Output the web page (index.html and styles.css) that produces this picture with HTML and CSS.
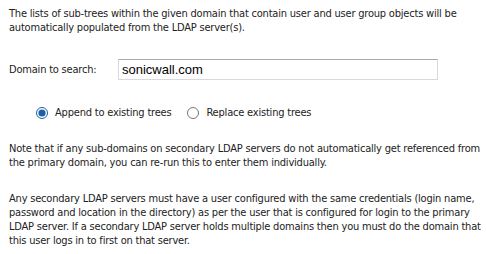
FILE: index.html
```html
<!DOCTYPE html>
<html lang="en">
  <head>
    <meta charset="UTF-8" />
    <title>Auto-configure</title>
    <link rel="stylesheet" href="styles.css">
  </head>
  <body>
    <div class="container">
      <p class="intro">
        The lists of sub-trees within the given domain that contain user and user group objects will be<br />
        automatically populated from the LDAP server(s).
      </p>

      <div class="field">
        <label class="field-label" for="domain">Domain to search:</label>
        <input type="text" id="domain" value="sonicwall.com" />
      </div>

      <div class="radio-group">
        <label><input type="radio" name="mode" value="append" checked /> Append to existing trees</label>
        <label><input type="radio" name="mode" value="replace" /> Replace existing trees</label>
      </div>

      <p class="note">
        Note that if any sub-domains on secondary LDAP servers do not automatically get referenced from<br />
        the primary domain, you can re-run this to enter them individually.
      </p>

      <p class="note">
        Any secondary LDAP servers must have a user configured with the same credentials (login name,<br />
        password and location in the directory) as per the user that is configured for login to the primary<br />
        LDAP server. If a secondary LDAP server holds multiple domains then you must do the domain that<br />
        this user logs in to first on that server.
      </p>
    </div>
  </body>
</html>
```

FILE: styles.css
```css
body {
  margin: 0;
  font-family: 'DejaVu Sans Condensed', 'DejaVu Sans', sans-serif;
  font-size: 11px;
  line-height: 14px;
  letter-spacing: -0.2px;
  color: #222;
  background-color: #fff;
}
.container {
  padding: 7px 0 0 9px;
  white-space: nowrap;
}
p {
  margin: 0;
}
.field {
  display: flex;
  align-items: center;
  margin-top: 24px;
}
.field-label {
  width: 109px;
}
input[type='text'] {
  width: 320px;
  height: 21px;
  box-sizing: border-box;
  padding: 0 3px;
  font-family: 'Liberation Sans', Arial, sans-serif;
  font-size: 13px;
  letter-spacing: 0;
  color: #000;
  border: 1px solid #d6dae0;
  border-top-color: #a9a9a9;
  border-radius: 1px;
  margin: 0;
}
.radio-group {
  display: flex;
  gap: 16px;
  margin: 26px 0 0 27px;
}
.radio-group label {
  display: flex;
  align-items: center;
  gap: 7px;
}
input[type='radio'] {
  margin: 0;
  width: 12px;
  height: 12px;
  accent-color: #1f5fa8;
}
.note {
  margin-top: 22px;
}
```
